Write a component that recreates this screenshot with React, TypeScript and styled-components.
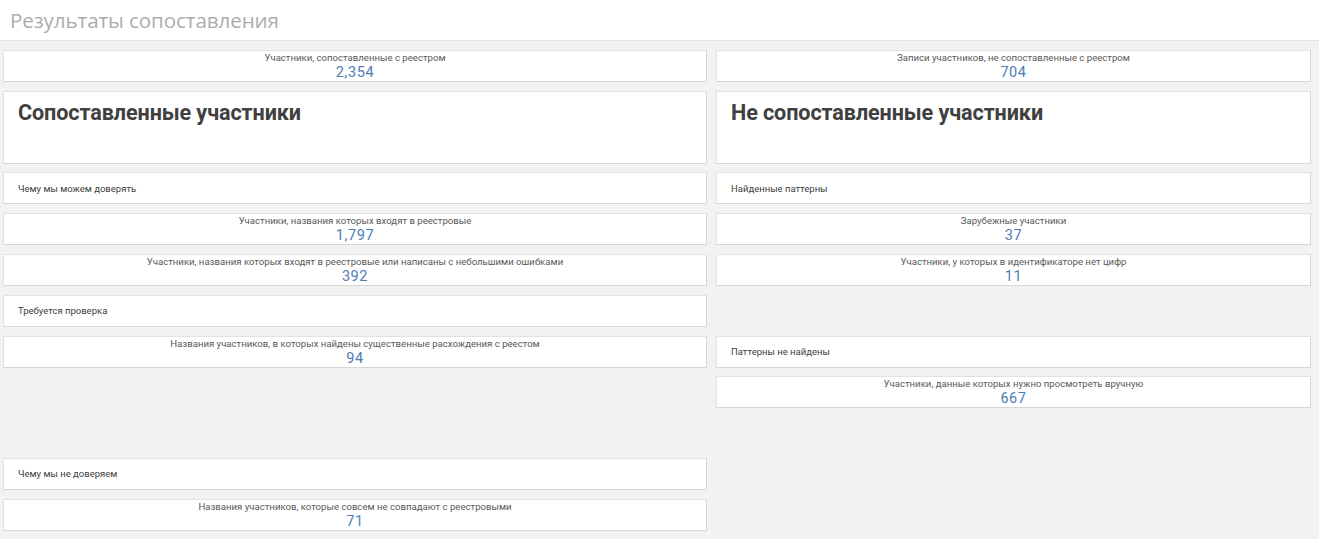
import React from 'react'
import styled, { createGlobalStyle } from 'styled-components'

const GlobalStyle = createGlobalStyle`
  html, body {
    margin: 0;
    padding: 0;
    background: #f2f2f2;
    font-family: Roboto, "Noto Sans", sans-serif;
  }
`;

const Page = styled.div`
  width: 1319px;
  height: 539px;
  overflow: hidden;
  background: #f2f2f2;
`;

const Header = styled.header`
  height: 40px;
  background: #ffffff;
  border-bottom: 1px solid #e3e3e3;
  display: flex;
  align-items: center;
  padding-left: 10px;
  box-sizing: content-box;
`;

const HeaderTitle = styled.h1`
  margin: 0;
  font-family: "Open Sans", "Noto Sans", sans-serif;
  font-weight: 400;
  font-size: 20.6px;
  color: #adadad;
  letter-spacing: -0.1px;
`;

const Board = styled.main`
  display: grid;
  grid-template-columns: 704px 595px;
  grid-auto-rows: 32px;
  column-gap: 9px;
  row-gap: 8.8px;
  padding: 9px 8px 0 3px;
`;

type CellProps = { $col: 1 | 2; $row: number; $span?: number }

const Card = styled.section<CellProps>`
  grid-column: ${(p) => p.$col};
  grid-row: ${(p) => p.$row} / span ${(p) => p.$span ?? 1};
  background: #ffffff;
  border: 1px solid #e2e2e2;
  border-right-color: #d6d6d6;
  border-bottom-color: #d6d6d6;
  box-sizing: border-box;
  min-width: 0;
`;

const KpiCard = styled(Card)`
  display: flex;
  flex-direction: column;
  align-items: center;
  padding-top: 1px;
`;

const KpiLabel = styled.div`
  font-size: 9.6px;
  line-height: 12px;
  color: #595959;
  white-space: nowrap;
`;

const KpiValue = styled.div`
  font-size: 14.5px;
  line-height: 18px;
  color: #4d7db5;
  letter-spacing: 0.6px;
`;

const SectionCard = styled(Card)`
  display: flex;
  align-items: center;
  padding-left: 14px;
  font-size: 9.5px;
  color: #404040;
`;

const TitleCard = styled(Card)`
  padding: 8px 14px;
`;

const Title = styled.h2`
  margin: 0;
  font-family: Roboto, "Noto Sans", sans-serif;
  font-weight: 700;
  font-size: 21.6px;
  line-height: 26px;
  color: #404040;
  letter-spacing: -0.1px;
`;

type Kpi = { col: 1 | 2; row: number; label: string; value: string }
type Section = { col: 1 | 2; row: number; text: string }

const kpis: Kpi[] = [
  { col: 1, row: 1, label: 'Участники, сопоставленные с реестром', value: '2,354' },
  { col: 2, row: 1, label: 'Записи участников, не сопоставленные с реестром', value: '704' },
  { col: 1, row: 5, label: 'Участники, названия которых входят в реестровые', value: '1,797' },
  { col: 2, row: 5, label: 'Зарубежные участники', value: '37' },
  { col: 1, row: 6, label: 'Участники, названия которых входят в реестровые или написаны с небольшими ошибками', value: '392' },
  { col: 2, row: 6, label: 'Участники, у которых в идентификаторе нет цифр', value: '11' },
  { col: 1, row: 8, label: 'Названия участников, в которых найдены существенные расхождения с реестом', value: '94' },
  { col: 2, row: 9, label: 'Участники, данные которых нужно просмотреть вручную', value: '667' },
  { col: 1, row: 12, label: 'Названия участников, которые совсем не совпадают с реестровыми', value: '71' },
]

const sections: Section[] = [
  { col: 1, row: 4, text: 'Чему мы можем доверять' },
  { col: 2, row: 4, text: 'Найденные паттерны' },
  { col: 1, row: 7, text: 'Требуется проверка' },
  { col: 2, row: 8, text: 'Паттерны не найдены' },
  { col: 1, row: 11, text: 'Чему мы не доверяем' },
]

const App: React.FC = () => {
  return (
    <Page>
      <GlobalStyle />
      <Header>
        <HeaderTitle>Результаты сопоставления</HeaderTitle>
      </Header>
      <Board>
        {kpis.map((k) => (
          <KpiCard key={k.label} $col={k.col} $row={k.row}>
            <KpiLabel>{k.label}</KpiLabel>
            <KpiValue>{k.value}</KpiValue>
          </KpiCard>
        ))}
        <TitleCard $col={1} $row={2} $span={2}>
          <Title>Сопоставленные участники</Title>
        </TitleCard>
        <TitleCard $col={2} $row={2} $span={2}>
          <Title>Не сопоставленные участники</Title>
        </TitleCard>
        {sections.map((s) => (
          <SectionCard key={s.text} $col={s.col} $row={s.row}>
            {s.text}
          </SectionCard>
        ))}
      </Board>
    </Page>
  )
}

export default App
